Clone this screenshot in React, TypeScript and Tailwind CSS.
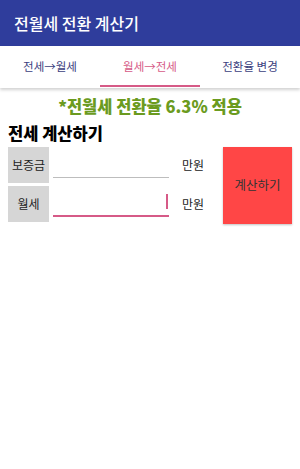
import React from 'react'

const font = '"Noto Sans CJK KR", "Noto Sans", Roboto, sans-serif'

function Row({ label, active }: { label: string; active?: boolean }) {
  return (
    <div className="flex h-[36px] items-center">
      <div className="flex h-full w-[41px] shrink-0 items-center justify-center bg-[#d6d6d6] text-[12px] text-[#222]">
        {label}
      </div>
      <div className="relative ml-[4px] h-full w-[116px] shrink-0">
        {active ? (
          <>
            <div className="absolute right-[1px] top-[8px] h-[15px] w-[2px] bg-[#d65a87]" />
            <div className="absolute bottom-[5px] left-0 right-0 h-[2px] bg-[#d65a87]" />
          </>
        ) : (
          <div className="absolute bottom-[5px] left-0 right-0 h-[1px] bg-[#bdbdbd]" />
        )}
      </div>
      <div className="ml-[13px] w-[28px] shrink-0 whitespace-nowrap text-[12px] text-[#222]">만원</div>
    </div>
  )
}

export default function App() {
  return (
    <div className="h-[469px] w-[300px] bg-white" style={{ fontFamily: font }}>
      <div className="flex h-[46px] items-center bg-[#2f3d9c] pl-[14px] text-[16px] font-medium text-white">
        전월세 전환 계산기
      </div>
      <div className="relative flex h-[42px] bg-white shadow-[0_2px_3px_rgba(0,0,0,0.18)]">
        <div className="flex flex-1 items-center justify-center text-[11.5px] text-[#3b4080]">전세→월세</div>
        <div className="relative flex flex-1 items-center justify-center text-[11.5px] text-[#d65a87]">
          월세→전세
          <div className="absolute bottom-[1px] left-0 right-0 h-[2px] bg-[#d65a87]" />
        </div>
        <div className="flex flex-1 items-center justify-center text-[11.5px] text-[#3b4080]">전환율 변경</div>
      </div>
      <div className="mt-[6px] text-center text-[16.5px] font-black leading-[24px] text-[#6b9b1f]">
        *전월세 전환율 6.3% 적용
      </div>
      <div className="mt-[3px] px-2 text-[16.5px] font-black leading-[24px] text-black">전세 계산하기</div>
      <div className="mt-[2px] flex px-2">
        <div className="flex flex-col gap-[3px]">
          <Row label="보증금" />
          <Row label="월세" active />
        </div>
        <div className="ml-[13px] flex h-[77px] w-[69px] shrink-0 items-center justify-center bg-[#ff4646] text-[12.5px] text-[#333] shadow-[0_1px_2px_rgba(0,0,0,0.25)]">
          계산하기
        </div>
      </div>
    </div>
  )
}
